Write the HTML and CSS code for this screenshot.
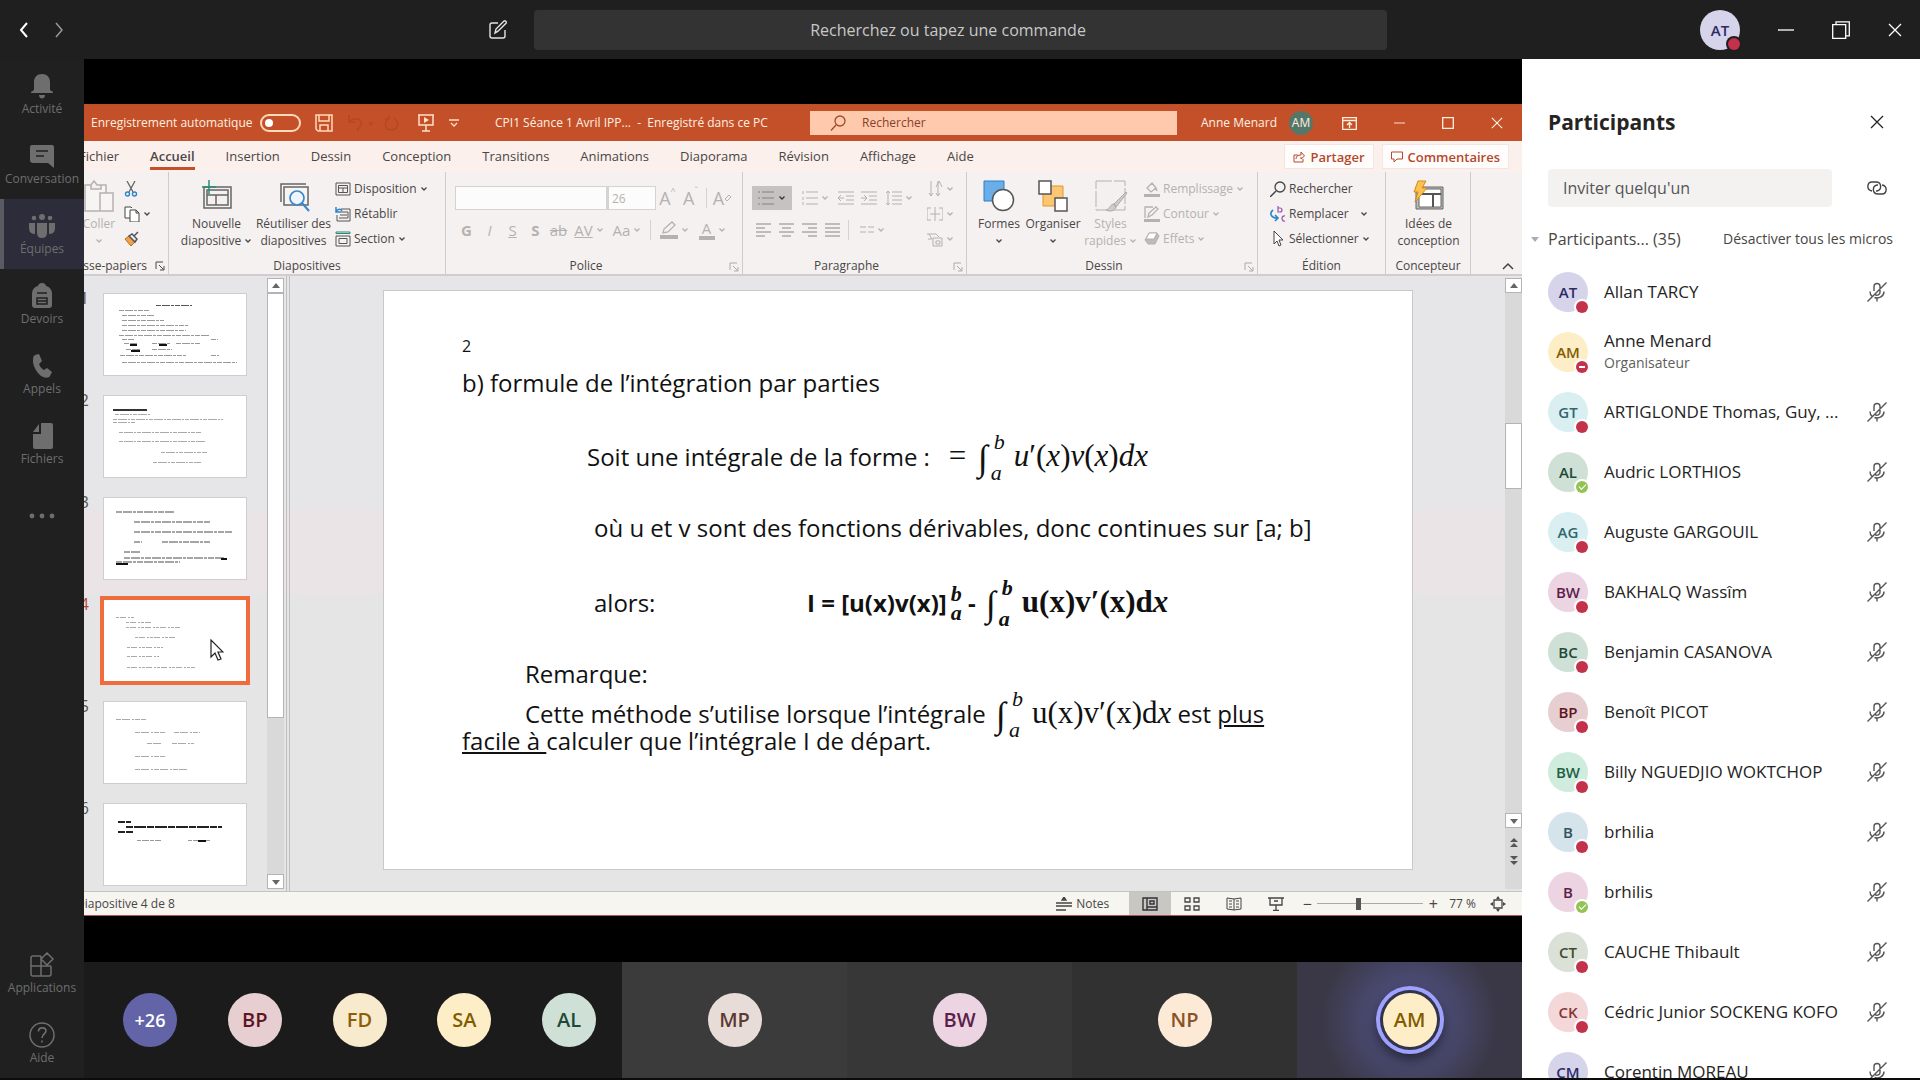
FILE: index.html
```html
<!DOCTYPE html>
<html lang="fr">
<head>
<meta charset="utf-8">
<title>Réunion - Équipes</title>
<link rel="stylesheet" href="styles.css">
</head>
<body>
<svg class="defs" aria-hidden="true">
  <symbol id="mic" viewBox="0 0 20 20"><path d="M7 9V4.500a3 3 0 0 1 6 0V10a3 3 0 0 1-5 2.500M3 9.500c0 2 .5 3.500 2 4.700M7.500 15.500c4.500 1.500 9.500-1 9.500-6M10 16v3.500M.5 19.500l19-19" fill="none" stroke="currentColor" stroke-width="1.400"/></symbol>
  <symbol id="caret" viewBox="0 0 8 8"><path d="M1.500 2.500L4 5l2.500-2.500" fill="none" stroke="currentColor" stroke-width="1.300"/></symbol>
  <symbol id="launch" viewBox="0 0 10 10"><path d="M1 8V1h7M4 4l4.500 4.500M9 5v4H5" fill="none" stroke="currentColor"/></symbol>
  <symbol id="close" viewBox="0 0 14 14"><path d="M1 1l12 12M13 1L1 13" fill="none" stroke="currentColor" stroke-width="1.300"/></symbol>
  <symbol id="dash" viewBox="0 0 16 14"><path d="M0 7h16" stroke="currentColor" stroke-width="1.300"/></symbol>
  <symbol id="up" viewBox="0 0 8 8"><path d="M0 6l4-5 4 5z" fill="currentColor"/></symbol>
  <symbol id="down" viewBox="0 0 8 8"><path d="M0 2l4 5 4-5z" fill="currentColor"/></symbol>
</svg>

<header class="topbar">
  <div class="history">
    <button aria-label="Précédent"><svg width="10" height="16" viewBox="0 0 10 16"><path d="M8 1L2 8l6 7" fill="none" stroke="#fff" stroke-width="2"/></svg></button>
    <button aria-label="Suivant"><svg width="10" height="16" viewBox="0 0 10 16"><path d="M2 1l6 7-6 7" fill="none" stroke="#999" stroke-width="1.500"/></svg></button>
  </div>
  <button class="compose" aria-label="Nouvelle conversation"><svg width="20" height="20" viewBox="0 0 20 20"><path d="M10 3H4a2 2 0 0 0-2 2v11a2 2 0 0 0 2 2h11a2 2 0 0 0 2-2v-6M7 13l1-4 8-8c1-.8 3 1 2 2.200l-8 8z" fill="none" stroke="#e4e4e4" stroke-width="1.400"/></svg></button>
  <input class="command" type="text" aria-label="Recherche" placeholder="Recherchez ou tapez une commande">
  <div class="window-tools">
    <span class="avatar c-violet on-dark">AT<i class="dot"></i></span>
    <button aria-label="Réduire"><svg width="16" height="14"><use href="#dash"/></svg></button>
    <button aria-label="Restaurer"><svg width="18" height="18" viewBox="0 0 18 18"><path d="M.7 3.700h13v13.600H.7zM4 3.500V.8h13.300v14H14" fill="none" stroke="#fff" stroke-width="1.300"/></svg></button>
    <button aria-label="Fermer"><svg width="14" height="14"><use href="#close"/></svg></button>
  </div>
</header>

<main class="app">
  <nav class="rail">
    <a href="#"><svg width="26" height="26" viewBox="0 0 26 26"><path d="M13 1c-5 0-8 3.500-8 8v8l-3 2v1h22v-1l-3-2V9c0-4.500-3-8-8-8zM10 22h6c0 2-1.200 3.500-3 3.500S10 24 10 22z" fill="currentColor"/></svg>Activité</a>
    <a href="#"><svg width="26" height="26" viewBox="0 0 26 26"><path d="M2 2h21q2 0 2 2v21l-6-5H4q-3 0-3-3V4q0-2 2-2z" fill="currentColor"/><path d="M7 8h12M7 13h8" stroke="#202020" stroke-width="1.500"/></svg>Conversation</a>
    <a href="#" class="active"><svg width="26" height="26" viewBox="0 0 26 26"><g fill="currentColor"><circle cx="13" cy="4" r="3"/><circle cx="5" cy="5" r="2.300"/><circle cx="21" cy="5" r="2.300"/><path d="M8 10h10v10q0 5-5 5t-5-5zM0 10h6v11Q0 21 0 15zM20 10h6v5q0 6-6 6z"/></g></svg>Équipes</a>
    <a href="#"><svg width="26" height="26" viewBox="0 0 26 26"><path d="M13 0c3 0 4 2 4 3 4 1 6 4 6 8v11q0 3-3 3H6q-3 0-3-3V11c0-4 2-7 6-8 0-1 1-3 4-3z" fill="currentColor"/><path d="M8 10h10M8 15h10v6H8zM8 18h10" fill="none" stroke="#202020" stroke-width="1.500"/></svg>Devoirs</a>
    <a href="#"><svg width="26" height="26" viewBox="0 0 26 26"><path d="M6 2l4-1 3 7-3 3c1 3 3 5 5 6l3-2 5 4-2 4c-1 2-4 2-7 1C8 21 4 13 4 8c0-3 0-5 2-6z" fill="currentColor"/></svg>Appels</a>
    <a href="#"><svg width="26" height="26" viewBox="0 0 26 26"><path d="M12 0h10q2 0 2 2v22q0 2-2 2H6q-2 0-2-2V11h8zM10 1v8H4z" fill="currentColor"/></svg>Fichiers</a>
    <a href="#" aria-label="Plus"><svg width="26" height="6" viewBox="0 0 26 6"><g fill="currentColor"><circle cx="3" cy="3" r="2.400"/><circle cx="13" cy="3" r="2.400"/><circle cx="23" cy="3" r="2.400"/></g></svg></a>
    <a href="#" class="push"><svg width="26" height="26" viewBox="0 0 26 26"><path d="M12 4H4q-2 0-2 2v16q0 2 2 2h16q2 0 2-2v-8M2 14h20M12 4v20M18 1l6 6-6 6-6-6z" fill="none" stroke="currentColor" stroke-width="1.500"/></svg>Applications</a>
    <a href="#"><svg width="26" height="26" viewBox="0 0 26 26"><circle cx="13" cy="13" r="12" fill="none" stroke="currentColor" stroke-width="1.500"/><path d="M9.500 9.500c0-5 7.500-4.500 7.500-.5 0 3-4 3-4 7M13 18.500v2" fill="none" stroke="currentColor" stroke-width="1.600"/></svg>Aide</a>
  </nav>

  <section class="meeting">
    <div class="share">
      <div class="ppt-title">
        <div class="quick">
          <label class="autosave">Enregistrement automatique<input type="checkbox" class="toggle"></label>
          <svg width="18" height="18" viewBox="0 0 18 18"><path d="M1 1h16v16H3l-2-2zM4 1v6h10V1M5 17v-6h8v6" fill="none" stroke="#ffd9b8" stroke-width="1.500"/></svg>
          <svg class="faded" width="56" height="18" viewBox="0 0 56 18"><path d="M2 1v7h7M2 8c5-6 13-3 12 3l-4 6M22 8l2 3 2-3M42 4c-5 4-5 12 2 12s9-8 3-12M42 1v4h-4" fill="none" stroke="currentColor" stroke-width="1.500"/></svg>
          <svg width="18" height="18" viewBox="0 0 18 18"><path d="M1 1h16M2 1v10h14V1M9 11v6M5 17h8" fill="none" stroke="#ffe0c4" stroke-width="1.500"/><path d="M7 3l5 3-5 3z" fill="#ffe0c4"/></svg>
          <svg width="10" height="8" viewBox="0 0 10 8"><path d="M0 1h10M2 4l3 3 3-3" fill="none" stroke="#ffe0c4" stroke-width="1.300"/></svg>
        </div>
        <span class="doc">CPI1 Séance 1 Avril IPP...&nbsp; -&nbsp; Enregistré dans ce PC</span>
        <label class="ppt-search"><svg width="16" height="16" viewBox="0 0 16 16"><circle cx="10" cy="6" r="5" fill="none" stroke="#a04a28" stroke-width="1.300"/><path d="M6 10l-5 5.500" stroke="#a04a28" stroke-width="1.300"/></svg><input type="text" aria-label="Rechercher" value="Rechercher"></label>
        <div class="ppt-user">
          <span class="who">Anne Menard<span class="mini">AM</span></span>
          <svg width="15" height="13" viewBox="0 0 15 13"><path d="M.7.700h13.600v11.600H.7zM1 3.500h13M7.500 11V5.500M5 8l2.500-2.500L10 8" fill="none" stroke="currentColor" stroke-width="1.300"/></svg>
          <svg width="11" height="14"><use href="#dash"/></svg>
          <svg width="12" height="12" viewBox="0 0 12 12"><path d="M.7.700h10.600v10.600H.7z" fill="none" stroke="currentColor" stroke-width="1.300"/></svg>
          <svg width="12" height="12"><use href="#close"/></svg>
        </div>
      </div>

      <div class="tabs">
        <div class="tablist">
          <a href="#">Fichier</a><a href="#" class="current">Accueil</a><a href="#">Insertion</a><a href="#">Dessin</a><a href="#">Conception</a><a href="#">Transitions</a><a href="#">Animations</a><a href="#">Diaporama</a><a href="#">Révision</a><a href="#">Affichage</a><a href="#">Aide</a>
        </div>
        <button class="pill"><svg width="12" height="12" viewBox="0 0 12 12"><path d="M5 4H1v7h9V8M3 8c0-3 2-4 5-4V1l3.500 4L8 8V6" fill="none" stroke="currentColor"/></svg>Partager</button>
        <button class="pill"><svg width="12" height="12" viewBox="0 0 12 12"><path d="M.5 1h11v7H6l-3 3V8H.5z" fill="none" stroke="currentColor"/></svg>Commentaires</button>
      </div>

      <div class="ribbon">
        <div class="group clip">
          <div class="tools">
            <button class="big pale"><svg width="32" height="32" viewBox="0 0 32 32"><path d="M17 31H2V5h6l3-4 3 4h9v8M8 5v4h10V5M17 13h13v18H17z" fill="#f7f5f4" stroke="currentColor" stroke-width="1.500"/></svg><span>Coller</span><span><svg width="8" height="16"><use href="#caret"/></svg></span></button>
            <div class="stack">
              <button aria-label="Couper"><svg width="14" height="16" viewBox="0 0 14 16"><path d="M3 0l6 11M11 0L5 11" stroke="#666" stroke-width="1.300"/><circle cx="3.500" cy="13" r="2" fill="none" stroke="#2a86c8" stroke-width="1.400"/><circle cx="10.500" cy="13" r="2" fill="none" stroke="#2a86c8" stroke-width="1.400"/></svg></button>
              <button aria-label="Copier"><svg width="16" height="16" viewBox="0 0 16 16"><path d="M6 12H1V1h6l1 1M6 4h6l3 3v9H6zM12 4v3h3" fill="#fff" stroke="#444"/></svg><svg width="8" height="8"><use href="#caret"/></svg></button>
              <button aria-label="Reproduire la mise en forme"><svg width="16" height="16" viewBox="0 0 16 16"><path d="M1 8l6 7 4-4-6-6z" fill="#f2a04a" stroke="#b86a20"/><path d="M5 5l6 6 2-3-5-5zM10 5l4-4" fill="#eee" stroke="#555" stroke-width="1.500"/></svg></button>
            </div>
          </div>
          <div class="caption right-end">Presse-papiers<svg width="10" height="10"><use href="#launch"/></svg></div>
        </div>

        <div class="group">
          <div class="tools">
            <button class="big"><svg width="32" height="32" viewBox="0 0 32 32"><path d="M3 7h27v21H3zM6 10h21v15H6zM6 15h21M15 15v10" fill="none" stroke="#666" stroke-width="1.500"/><path d="M8 0v14M1 7h14" stroke="#2d8a78" stroke-width="1.500"/></svg><span>Nouvelle</span><span>diapositive <svg width="8" height="8"><use href="#caret"/></svg></span></button>
            <button class="big"><svg width="32" height="32" viewBox="0 0 32 32"><path d="M3 22V4h25M6 25V7h24v18z" fill="#f7f5f4" stroke="#666" stroke-width="1.500"/><circle cx="19" cy="18" r="7" fill="#eef5fb" stroke="#3b86cc" stroke-width="1.700"/><path d="M24 23l7 8" stroke="#3b86cc" stroke-width="2"/></svg><span>Réutiliser des</span><span>diapositives</span></button>
            <div class="stack">
              <button><svg width="16" height="16" viewBox="0 0 16 16"><path d="M1 2h14v12H1zM3.500 4.500h9v7h-9zM3.500 7h9M8 7v5" fill="none" stroke="#555"/></svg>Disposition<svg width="8" height="8"><use href="#caret"/></svg></button>
              <button><svg width="16" height="16" viewBox="0 0 16 16"><path d="M6 3h9v12H2V9M6 6h7v6H4M5 9h7" fill="none" stroke="#555"/><path d="M1 1v5h5M1 6c2-4 5-3 6-1" fill="none" stroke="#2a86c8" stroke-width="1.500"/></svg>Rétablir</button>
              <button><svg width="16" height="16" viewBox="0 0 16 16"><path d="M1 5h14v10H1zM4 7.500h8v5H4z" fill="none" stroke="#555"/><path d="M1 2.500h14V1H1z" stroke="#2d8a78" fill="none"/></svg>Section<svg width="8" height="8"><use href="#caret"/></svg></button>
            </div>
          </div>
          <div class="caption">Diapositives</div>
        </div>

        <div class="group">
          <div class="tools rows pale">
            <div class="row">
              <select class="font" aria-label="Police"><option></option></select><select class="size" aria-label="Taille"><option>26</option></select>
              <button class="ch l">A<sup>^</sup></button><button class="ch l">A<sup>ˇ</sup></button><i class="sep"></i><button class="ch l">A<svg width="8" height="8" viewBox="0 0 8 8"><path d="M1 5l4-4 2 2-4 4z" fill="none" stroke="currentColor"/></svg></button>
            </div>
            <div class="row">
              <button class="ch"><b>G</b></button><button class="ch"><em>I</em></button><button class="ch"><u>S</u></button><button class="ch"><b>S</b></button><button class="ch"><s>ab</s></button><button class="ch w"><u>AV</u><svg width="8" height="8"><use href="#caret"/></svg></button><button class="ch w">Aa<svg width="8" height="8"><use href="#caret"/></svg></button><i class="sep"></i>
              <button class="ch w"><svg width="18" height="18" viewBox="0 0 18 18"><path d="M3 12l1-4 8-7 3 3-7 7z" fill="none" stroke="currentColor" stroke-width="1.300"/><path d="M0 14h18v4H0z" fill="currentColor"/></svg><svg width="8" height="8"><use href="#caret"/></svg></button><button class="ch w"><span class="ink">A</span><svg width="8" height="8"><use href="#caret"/></svg></button>
            </div>
          </div>
          <div class="caption launched">Police<svg class="corner" width="10" height="10"><use href="#launch"/></svg></div>
        </div>

        <div class="group">
          <div class="tools pale">
            <div class="rows">
              <div class="row">
                <button class="sel"><svg width="16" height="16" viewBox="0 0 16 16"><path d="M4 2h12M4 8h12M4 14h12M0 2h2M0 8h2M0 14h2" stroke="#999" stroke-width="1.300"/></svg><svg width="8" height="8" class="ink-dark"><use href="#caret"/></svg></button>
                <button class="ch w"><svg width="16" height="16" viewBox="0 0 16 16"><path d="M4 2h12M4 8h12M4 14h12M1 1v3M1 7v3M1 12v3" stroke="currentColor"/></svg><svg width="8" height="8"><use href="#caret"/></svg></button>
                <button class="ch"><svg width="16" height="14" viewBox="0 0 16 14"><path d="M0 1h16M8 5h8M8 9h8M0 13h16M6 7H0M3 4L0 7l3 3" fill="none" stroke="currentColor"/></svg></button>
                <button class="ch"><svg width="16" height="14" viewBox="0 0 16 14"><path d="M0 1h16M8 5h8M8 9h8M0 13h16M0 7h6M3 4l3 3-3 3" fill="none" stroke="currentColor"/></svg></button>
                <button class="ch w"><svg width="16" height="14" viewBox="0 0 16 14"><path d="M6 1h10M6 5h10M6 9h10M6 13h10M2 0v14M0 2l2-2 2 2M0 12l2 2 2-2" fill="none" stroke="currentColor"/></svg><svg width="8" height="8"><use href="#caret"/></svg></button>
              </div>
              <div class="row ink-mid">
                <button class="ch"><svg width="15" height="14" viewBox="0 0 15 14"><path d="M0 1h15M0 5h9M0 9h15M0 13h9" stroke="currentColor"/></svg></button>
                <button class="ch"><svg width="15" height="14" viewBox="0 0 15 14"><path d="M0 1h15M3 5h9M0 9h15M3 13h9" stroke="currentColor"/></svg></button>
                <button class="ch"><svg width="15" height="14" viewBox="0 0 15 14"><path d="M0 1h15M6 5h9M0 9h15M6 13h9" stroke="currentColor"/></svg></button>
                <button class="ch"><svg width="15" height="14" viewBox="0 0 15 14"><path d="M0 1h15M0 5h15M0 9h15M0 13h15" stroke="currentColor"/></svg></button><i class="sep"></i>
                <button class="ch w pale"><svg width="14" height="8" viewBox="0 0 14 8"><path d="M0 1h6M8 1h6M0 6h6M8 6h6" stroke="currentColor"/></svg><svg width="8" height="8"><use href="#caret"/></svg></button>
              </div>
            </div>
            <div class="stack end">
              <button aria-label="Orientation"><svg width="16" height="16" viewBox="0 0 16 16"><path d="M4 0v15M2 12l2 3 2-3M11 0v15M9 12l2 3 2-3M9 6l3-6 3 6" fill="none" stroke="currentColor"/></svg><svg width="8" height="8"><use href="#caret"/></svg></button>
              <button aria-label="Aligner"><svg width="16" height="16" viewBox="0 0 16 16"><path d="M4 2H0v12h4M12 2h4v12h-4M3 8h10M8 1v14" fill="none" stroke="currentColor"/></svg><svg width="8" height="8"><use href="#caret"/></svg></button>
              <button aria-label="SmartArt"><svg width="16" height="16" viewBox="0 0 16 16"><path d="M0 3h9l3 3M2 3l3 5H1M6 7h9v8H6zM9 10h4v3H9z" fill="none" stroke="currentColor"/></svg><svg width="8" height="8"><use href="#caret"/></svg></button>
            </div>
          </div>
          <div class="caption launched">Paragraphe<svg class="corner" width="10" height="10"><use href="#launch"/></svg></div>
        </div>

        <div class="group">
          <div class="tools draw">
            <button class="big slim"><svg width="32" height="32" viewBox="0 0 32 32"><path d="M1 1h20v20H1z" fill="#69aee8" stroke="#2f7fc4"/><circle cx="20" cy="20" r="10.500" fill="#fff" stroke="#555" stroke-width="1.500"/></svg><span>Formes</span><span><svg width="8" height="12"><use href="#caret"/></svg></span></button>
            <button class="big slim"><svg width="32" height="32" viewBox="0 0 32 32"><path d="M6 6h20v20H6z" fill="#fbc773" stroke="#e0952c"/><path d="M2 1h12v13H2zM18 18h12v13H18z" fill="#fff" stroke="#555" stroke-width="1.500"/></svg><span>Organiser</span><span><svg width="8" height="12"><use href="#caret"/></svg></span></button>
            <button class="big styles pale"><svg width="32" height="32" viewBox="0 0 32 32"><path d="M1 1h29v29H1z" fill="#f3f0ef" stroke="currentColor" stroke-dasharray="16 2"/><path d="M31 12L19 24l2 3 11-14zM19 24c-4 0-4 5-8 6 4 2 9 1 10-3z" fill="#ccc" stroke="#aaa"/></svg><span>Styles</span><span>rapides <svg width="8" height="8"><use href="#caret"/></svg></span></button>
            <div class="stack pale">
              <button><svg width="16" height="16" viewBox="0 0 16 16"><path d="M3 7l5-5 4 5-5 4zM12 7l1 3" fill="none" stroke="currentColor" stroke-width="1.300"/><path d="M0 13h16v3H0z" fill="currentColor"/></svg>Remplissage<svg width="8" height="8"><use href="#caret"/></svg></button>
              <button><svg width="16" height="16" viewBox="0 0 16 16"><path d="M9 1H1v11M4 11l1-4 7-6 2 2-6 6z" fill="none" stroke="currentColor" stroke-width="1.300"/><path d="M0 13h16v3H0z" fill="currentColor"/></svg>Contour<svg width="8" height="8"><use href="#caret"/></svg></button>
              <button><svg width="16" height="16" viewBox="0 0 16 16"><path d="M1 9l4-7h8l2 3-4 8H4z" fill="#bbb" stroke="currentColor"/><path d="M5 2h8l-3 6H2z" fill="#fff" stroke="currentColor"/></svg>Effets<svg width="8" height="8"><use href="#caret"/></svg></button>
            </div>
          </div>
          <div class="caption launched">Dessin<svg class="corner" width="10" height="10"><use href="#launch"/></svg></div>
        </div>

        <div class="group">
          <div class="tools">
            <div class="stack">
              <button><svg width="16" height="16" viewBox="0 0 16 16"><circle cx="10" cy="6" r="5" fill="none" stroke="#444" stroke-width="1.300"/><path d="M6 10l-6 6" stroke="#444" stroke-width="1.500"/></svg>Rechercher</button>
              <button><svg width="16" height="16" viewBox="0 0 16 16"><path d="M8 0v6h2a2 2 0 0 0 0-4H8" fill="none" stroke="#9a4fb0" stroke-width="1.200"/><path d="M15 10c-4-1-4 6 0 5" fill="none" stroke="#9a4fb0" stroke-width="1.200"/><path d="M3 4c-4 3-2 8 4 8M5 9l3 3-3 3" fill="none" stroke="#2a86c8" stroke-width="1.600"/></svg>Remplacer<svg class="far" width="8" height="8"><use href="#caret"/></svg></button>
              <button><svg width="16" height="16" viewBox="0 0 16 16"><path d="M4 0v13l3-3 2 5 2-1-2-5h4z" fill="#fff" stroke="#444"/></svg>Sélectionner<svg width="8" height="8"><use href="#caret"/></svg></button>
            </div>
          </div>
          <div class="caption">Édition</div>
        </div>

        <div class="group">
          <div class="tools">
            <button class="big"><svg width="32" height="32" viewBox="0 0 32 32"><path d="M3 7h27v22H3z" fill="#bbb" stroke="#666"/><path d="M6 9h22v18H6z" fill="#fff" stroke="#666"/><path d="M6 14h22M20 14v13" stroke="#555" stroke-width="2"/><path d="M5 1h8L9 8h5L2 22l3-10H1z" fill="#ffc14d" stroke="#d08a1e"/></svg><span>Idées de</span><span>conception</span></button>
          </div>
          <div class="caption">Concepteur</div>
        </div>
        <button class="collapse" aria-label="Réduire le ruban"><svg width="12" height="8" viewBox="0 0 12 8"><path d="M1 7l5-5 5 5" fill="none" stroke="#444" stroke-width="1.500"/></svg></button>
      </div>

      <div class="work">
        <ul class="nums"><li>1</li><li>2</li><li>3</li><li class="hot">4</li><li>5</li><li>6</li></ul>
        <ol class="thumbs">
          <li><svg viewBox="0 0 142 81"><g stroke="#999" stroke-dasharray="5 1 8 1 3 1"><path d="M52 11.500h36" stroke="#555"/><path d="M15 16.500h30M18 21.500h32M18 26.500h42M18 31.500h66M18 36.500h64M15 41.500h90M18 45.500h12M20 49.500h13M48 49.500h18M72 49.500h25M22 55.500h14M48 55.500h20M16 61.500h66M18 68.500h115M107 45.500h7M107 61.500h8"/></g><path d="M26 51h7M55 51h8M27 57h9" stroke="#111" stroke-width="2"/></svg></li>
          <li><svg viewBox="0 0 142 81"><path d="M9 14h34" stroke="#333" stroke-width="2"/><g stroke="#aaa" stroke-dasharray="4 1 9 1 2 1"><path d="M11 18.500h36M9 23.500h110M9 26.500h22M15 36.500h82M15 45.500h86M57 56.500h46M49 66.500h48"/></g></svg></li>
          <li><svg viewBox="0 0 142 81"><g stroke="#888" stroke-dasharray="6 1 9 1 3 1" stroke-width="1.500"><path d="M12 14h58M30 24h76M30 34h98M30 44h8M58 44h48M20 54h16M20 60h100M12 64h64"/></g><path d="M12 66h12M117 61h6" stroke="#111" stroke-width="2"/></svg></li>
          <li class="on"><svg viewBox="0 0 142 81"><g stroke="#aaa" stroke-dasharray="3 1 6 2 2 1"><path d="M12 17.500h19M22 22.500h26M22 27.500h54M31 37.500h42M23 47.500h36M23 56.500h32M23 67.500h68"/></g><svg x="106" y="39" width="14" height="22" viewBox="0 0 14 22"><path d="M1 1v17l4-4 3 7 3-1-3-7h5z" fill="#fff" stroke="#222" stroke-width="1.200"/></svg></svg></li>
          <li><svg viewBox="0 0 142 81"><g stroke="#aaa" stroke-dasharray="5 1 8 2 2 1"><path d="M12 17.500h30M31 30.500h30M70 30.500h26M43 41.500h14M68 41.500h22M31 54.500h30M31 67.500h52"/></g></svg></li>
          <li><svg viewBox="0 0 142 81"><g stroke="#222" stroke-width="2" stroke-dasharray="7 1 12 1"><path d="M14 18h13M22 23h96M14 28h15"/></g><g stroke="#999"><path d="M33 36.500h24M84 36.500h22" stroke-dasharray="4 1 7 1"/><path d="M94 37h8" stroke="#111" stroke-width="2"/></g></svg></li>
        </ol>
        <div class="scroll left"><span class="btn"><svg width="8" height="8"><use href="#up"/></svg></span><span class="grip"></span><span class="btn last"><svg width="8" height="8"><use href="#down"/></svg></span></div>
        <div class="canvas">
          <article class="slide">
            <p class="no">2</p>
            <p class="head">b) formule de l’intégration par parties</p>
            <p class="form">Soit une intégrale de la forme :&nbsp;&nbsp; <span class="m">=&nbsp;<span class="int">∫<span class="lim"><i>b</i><i>a</i></span></span><i>u</i>′(<i>x</i>)<i>v</i>(<i>x</i>)<i>dx</i></span></p>
            <p class="where">où u et v sont des fonctions dérivables, donc continues sur [a; b]</p>
            <p class="then"><span class="so">alors:</span><b>I = [u(x)v(x)]<span class="m"><span class="lim tight"><i>b</i><i>a</i></span></span> - <span class="m"><span class="int">∫<span class="lim"><i>b</i><i>a</i></span></span>u(x)v′(x)d<i>x</i></span></b></p>
            <p class="note">Remarque:</p>
            <p class="body">Cette méthode s’utilise lorsque l’intégrale <span class="m"><span class="int">∫<span class="lim"><i>b</i><i>a</i></span></span>u(x)v′(x)d<i>x</i></span> est <u>plus</u><br><u>facile à </u>calculer que l’intégrale I de départ.</p>
          </article>
        </div>
        <div class="scroll right"><span class="btn"><svg width="8" height="8"><use href="#up"/></svg></span><span class="grip"></span><span class="btn last"><svg width="8" height="8"><use href="#down"/></svg></span><svg class="jump" width="10" height="10" viewBox="0 0 10 10"><path d="M1 5l4-4 4 4zM1 10l4-4 4 4z" fill="#555"/></svg><svg class="jump" width="10" height="10" viewBox="0 0 10 10"><path d="M1 0l4 4 4-4zM1 5l4 4 4-4z" fill="#555"/></svg></div>
      </div>

      <div class="status">
        <span class="where-am">Diapositive 4 de 8</span>
        <button class="notes"><svg width="16" height="14" viewBox="0 0 16 14"><path d="M6 3l2-3 2 3zM0 6h16M0 9h16M0 13h10" fill="#444" stroke="#444" stroke-width="1.300"/></svg>Notes</button>
        <button class="view on" aria-label="Normal"><svg width="16" height="14" viewBox="0 0 16 14"><path d="M1 1h14v12H1zM5 1v12M5 10h10M8 4h4v3H8z" fill="none" stroke="#333" stroke-width="1.400"/></svg></button>
        <button class="view" aria-label="Trieuse"><svg width="16" height="14" viewBox="0 0 16 14"><path d="M1 1h5v4H1zM10 1h5v4h-5zM1 9h5v4H1zM10 9h5v4h-5z" fill="none" stroke="#444" stroke-width="1.300"/></svg></button>
        <button class="view" aria-label="Lecture"><svg width="16" height="14" viewBox="0 0 16 14"><path d="M8 2v11M8 2L1 1v11l7 1 7-1V1zM3 4h3M3 7h3M3 10h3M10 4h3M10 7h3M10 10h3" fill="none" stroke="#444"/></svg></button>
        <button class="view" aria-label="Diaporama"><svg width="16" height="14" viewBox="0 0 16 14"><path d="M0 1h16M2 1v7h12V1M8 8v5M5 13.300h6M6 4h4" fill="none" stroke="#444" stroke-width="1.300"/></svg></button>
        <span class="sign">−</span><input class="zoom" type="range" min="10" max="200" value="82" aria-label="Zoom"><span class="sign">+</span>
        <span class="pct">77 %</span>
        <button aria-label="Ajuster"><svg width="16" height="16" viewBox="0 0 16 16"><path d="M4 4h8v8H4z" fill="none" stroke="#444" stroke-width="1.300"/><path d="M8 0l2 3H6zM8 16l2-3H6zM0 8l3-2v4zM16 8l-3-2v4z" fill="#444"/></svg></button>
      </div>
    </div>

    <div class="strip">
      <div class="crowd">
        <span class="face more-count">+26</span><span class="face c-rose">BP</span><span class="face c-cream">FD</span><span class="face c-yellow">SA</span><span class="face c-green">AL</span>
      </div>
      <div class="tile t1"><span class="face c-clay">MP</span></div>
      <div class="tile t2"><span class="face c-pink">BW</span></div>
      <div class="tile t3"><span class="face c-peach">NP</span></div>
      <div class="tile t4"><span class="face c-yellow speaking">AM</span></div>
    </div>
  </section>

  <aside class="people">
    <div class="people-head"><h2>Participants</h2><button aria-label="Fermer"><svg width="14" height="14"><use href="#close"/></svg></button></div>
    <div class="invite"><input type="text" aria-label="Inviter quelqu'un" placeholder="Inviter quelqu'un"><button aria-label="Copier le lien"><svg width="20" height="16" viewBox="0 0 20 16"><path d="M5 11C-1 10 0 2 5 2h4c6 0 6 8 1 9H9M15 5c6 1 5 9 0 9h-4c-6 0-6-8-1-9h1" fill="none" stroke="currentColor" stroke-width="1.400"/></svg></button></div>
    <div class="section"><svg width="8" height="8"><use href="#down"/></svg><h3>Participants... (35)</h3><a href="#">Désactiver tous les micros</a></div>
    <ul class="list">
      <li><span class="avatar c-violet">AT<i class="dot"></i></span><span class="name">Allan TARCY</span><svg><use href="#mic"/></svg></li>
      <li><span class="avatar c-yellow">AM<i class="dot busy"></i></span><span class="name">Anne Menard<small>Organisateur</small></span></li>
      <li><span class="avatar c-cyan">GT<i class="dot"></i></span><span class="name">ARTIGLONDE Thomas, Guy, ...</span><svg><use href="#mic"/></svg></li>
      <li><span class="avatar c-green">AL<i class="dot ok"></i></span><span class="name">Audric LORTHIOS</span><svg><use href="#mic"/></svg></li>
      <li><span class="avatar c-cyan">AG<i class="dot"></i></span><span class="name">Auguste GARGOUIL</span><svg><use href="#mic"/></svg></li>
      <li><span class="avatar c-pink">BW<i class="dot"></i></span><span class="name">BAKHALQ Wassîm</span><svg><use href="#mic"/></svg></li>
      <li><span class="avatar c-green">BC<i class="dot"></i></span><span class="name">Benjamin CASANOVA</span><svg><use href="#mic"/></svg></li>
      <li><span class="avatar c-rose">BP<i class="dot"></i></span><span class="name">Benoît PICOT</span><svg><use href="#mic"/></svg></li>
      <li><span class="avatar c-mint">BW<i class="dot"></i></span><span class="name">Billy NGUEDJIO WOKTCHOP</span><svg><use href="#mic"/></svg></li>
      <li><span class="avatar c-steel">B<i class="dot"></i></span><span class="name">brhilia</span><svg><use href="#mic"/></svg></li>
      <li><span class="avatar c-pink">B<i class="dot ok"></i></span><span class="name">brhilis</span><svg><use href="#mic"/></svg></li>
      <li><span class="avatar c-olive">CT<i class="dot"></i></span><span class="name">CAUCHE Thibault</span><svg><use href="#mic"/></svg></li>
      <li><span class="avatar c-red">CK<i class="dot"></i></span><span class="name">Cédric Junior SOCKENG KOFO</span><svg><use href="#mic"/></svg></li>
      <li><span class="avatar c-violet">CM<i class="dot"></i></span><span class="name">Corentin MOREAU</span><svg><use href="#mic"/></svg></li>
    </ul>
  </aside>
</main>
</body>
</html>
```
FILE: styles.css
```css
* { box-sizing: border-box; }
body {
  margin: 0; height: 100vh; overflow: hidden;
  display: flex; flex-direction: column;
  background: #1f1f1f; border-bottom: 2px solid #0c0c0c;
  font: 13px/18px "Open Sans", "Noto Sans", sans-serif; color: #252423;
}
button, input, select { font: inherit; color: inherit; border: 0; background: none; padding: 0; margin: 0; }
button { display: flex; align-items: center; justify-content: center; }
a { color: inherit; text-decoration: none; }
ul, ol { list-style: none; margin: 0; padding: 0; }
h2, h3, p { margin: 0; font-weight: 400; }
svg { flex: none; display: block; }
.defs { position: absolute; width: 0; height: 0; }

/* top bar */
.topbar { flex: none; height: 59px; display: grid; grid-template-columns: 1fr 853px 1fr; align-items: center; color: #fff; grid-template-areas: "left mid right"; }
.history { grid-area: left; display: flex; gap: 25px; padding-left: 19px; }
.compose { grid-area: left; justify-self: end; margin-right: 26px; }
.command { grid-area: mid; height: 40px; border-radius: 4px; background: #333; text-align: center; padding-right: 24px; font-size: 16px; }
.command::placeholder { color: #c8c8c8; opacity: 1; }
.window-tools { grid-area: right; justify-self: end; display: flex; align-items: center; gap: 38px; padding-right: 18px; }

/* avatars */
.avatar { position: relative; flex: none; width: 40px; height: 40px; border-radius: 50%; display: grid; place-items: center; font-size: 15px; font-weight: 600; }
.dot { position: absolute; right: 0; bottom: -1px; width: 12px; height: 12px; border-radius: 50%; background: #c4314b; box-shadow: 0 0 0 2px #fff; }
.on-dark .dot { box-shadow: 0 0 0 2px #1f1f1f; bottom: 0; }
.busy::after { content: ""; position: absolute; left: 3px; top: 5px; width: 6px; height: 2px; background: #fff; }
.ok { background: #92c353; }
.ok::after { content: ""; position: absolute; left: 3px; top: 3px; width: 6px; height: 3px; border: solid #fff; border-width: 0 0 1px 1px; transform: rotate(-45deg); }
.c-violet { background: #d6d4ea; color: #2f2a66; }
.c-yellow { background: #fdeec8; color: #835c00; }
.c-cream { background: #f8eacc; color: #8a5f0c; }
.c-cyan { background: #d9eff2; color: #32666d; }
.c-green { background: #cfe1d6; color: #1f4a35; }
.c-pink { background: #ecd4e2; color: #5c1f4b; }
.c-rose { background: #e6ced1; color: #5f1521; }
.c-mint { background: #d0ecdd; color: #1f6044; }
.c-steel { background: #d5e3ea; color: #33525f; }
.c-olive { background: #dbe1d6; color: #3e4c2e; }
.c-red { background: #f4d7d8; color: #83343a; }
.c-clay { background: #e8dcd9; color: #5c3a30; }
.c-peach { background: #fce9d6; color: #8a5326; }

.app { flex: 1; min-height: 0; display: grid; grid-template-columns: 84px minmax(0, 1fr) 398px; }

/* left rail */
.rail { display: flex; flex-direction: column; color: #6e6e6e; background: #202020; }
.rail a { height: 70px; display: flex; flex-direction: column; align-items: center; justify-content: center; gap: 1px; font-size: 12px; padding-top: 3px; }
.rail .active { background: #2c2c3b; border-left: 4px solid #5a5a62; padding-right: 4px; }
.rail .push { margin-top: auto; }

/* shared screen */
.meeting { display: flex; flex-direction: column; min-width: 0; min-height: 0; background: #000; padding-top: 45px; }
.share { flex: 1; min-height: 0; display: flex; flex-direction: column; overflow: hidden; background: #e6e6e8; color: #4a4646; border-bottom: 1px solid #a8545c; margin-bottom: 46px; font-size: 12px; }
.ppt-title { height: 37px; flex: none; display: grid; grid-template-columns: 405fr 321fr 367fr 345fr; align-items: center; background: #c4502a; color: #fff0e0; border-top: 1px solid #b8502a; white-space: nowrap; }
.quick { display: flex; align-items: center; gap: 14px; padding-left: 7px; }
.autosave { display: flex; align-items: center; gap: 7px; }
.toggle { appearance: none; width: 41px; height: 18px; border: 2px solid #ffd9b8; border-radius: 9px; display: flex; align-items: center; padding-left: 3px; }
.toggle::before { content: ""; width: 8px; height: 8px; border-radius: 50%; background: #fff; }
.faded { color: #b4481f; }
.doc { padding-left: 6px; }
.ppt-search { height: 24px; background: #ffc9ae; display: flex; align-items: center; gap: 16px; padding-left: 20px; color: #8a4028; }
.ppt-search input { flex: 1; min-width: 0; }
.ppt-user { display: flex; align-items: center; justify-content: flex-end; padding-right: 19px; gap: 37px; }
.who { display: flex; align-items: center; gap: 12px; margin-right: -8px; }
.mini { width: 24px; height: 24px; border-radius: 50%; background: #55776a; display: grid; place-items: center; }

.tabs { flex: none; height: 31px; display: flex; align-items: center; gap: 10px; background: #fbf0ec; padding-right: 14px; font-size: 13px; white-space: nowrap; }
.tablist { flex: 1; display: flex; gap: 31px; margin-left: -5px; }
.tablist a { height: 27px; line-height: 27px; }
.tablist .current { font-weight: 600; border-bottom: 3px solid #c4502a; }
.pill { height: 23px; gap: 5px; padding: 0 8px; background: #fffdfb; color: #b7472a; font-weight: 600; box-shadow: 0 0 0 1px #f3e6e2; }

.ribbon { flex: none; height: 104px; background: #f4f1f0; display: grid; grid-template-columns: 85fr 277fr 297fr 224fr 291fr 128fr 85fr 51fr; border-bottom: 2px solid #cfcdce; white-space: nowrap; line-height: 17px; }
.group { position: relative; min-width: 0; border-right: 1px solid #cfcbca; display: flex; flex-direction: column; justify-content: space-between; }
.tools { display: flex; padding-left: 9px; }
.caption { text-align: center; line-height: 16px; }
.launched { padding-right: 16px; }
.corner { position: absolute; right: 3px; bottom: 2px; color: #aaa; }
.right-end { display: flex; justify-content: flex-end; align-items: center; gap: 8px; padding-right: 3px; }
.clip .tools { padding-left: 0; }
.clip .big { width: 30px; }
.big { flex-direction: column; justify-content: flex-start; width: 77px; padding-top: 8px; }
.big > svg { margin-bottom: 3px; }
.big span { display: flex; align-items: center; gap: 3px; height: 17px; }
.big.slim { width: 54px; }
.big.styles { width: 61px; }
.tools.draw { padding-left: 5px; }
.group:last-of-type .tools { padding-left: 4px; }
.pale { color: #b5b1b0; }
.stack { display: flex; flex-direction: column; align-items: flex-start; padding: 4px 0 0 3px; }
.stack button { height: 25px; gap: 3px; }
.far { margin-left: 8px; }
.clip .stack { padding-left: 10px; }
.rows { display: flex; flex-direction: column; gap: 8px; padding-top: 14px; }
.row { display: flex; align-items: center; height: 24px; }
.font, .size { appearance: none; height: 24px; background: #fdfcfc; border: 1px solid #d6d2d1; width: 152px; padding: 0 3px; }
.size { width: 49px; border-left-width: 2px; }
.ch { width: 23px; height: 24px; font-size: 15px; gap: 3px; }
.ch sup { font-size: 9px; line-height: 9px; align-self: flex-start; }
.row .l { font-size: 18px; gap: 0; }
.w { width: 38px; }
.ink { border-bottom: 4px solid #b5b1b0; line-height: 15px; width: 16px; }
.sep { width: 1px; height: 20px; background: #d6d2d1; margin: 0 4px; }
.sel { width: 40px; height: 24px; background: #c6c2c1; gap: 4px; margin-right: 4px; }
.ink-dark { color: #333; }
.ink-mid { color: #8a8685; }
.end { margin-left: auto; padding-right: 12px; }
.collapse { align-self: end; margin-bottom: 4px; justify-self: end; margin-right: 8px; }

/* slide workspace */
.work { flex: 1; min-height: 0; display: flex; background: linear-gradient(#e6e6e8 0 234px, #ebe4e6 234px 318px, #e5e5e6 318px); border-bottom: 1px solid #c4c4c6; }
.nums { width: 16px; flex: none; padding-top: 13px; overflow: hidden; direction: rtl; }
.nums li { height: 102px; font-size: 16px; color: #555; margin-right: 11px; }
.nums .hot { color: #b8443a; }
.thumbs { width: 167px; display: flex; flex-direction: column; gap: 21px; padding: 18px 0 0 4px; flex: none; overflow: hidden; }
.thumbs li { flex: none; width: 142px; height: 81px; background: #fff; outline: 1px solid #cfcdd0; }
.thumbs .on { outline: 4px solid #f06c3c; }
.scroll { flex: none; width: 17px; display: flex; flex-direction: column; background: #d9d9da; margin: 2px 0; color: #666; }
.btn, .grip { background: #fff; border: 1px solid #b4b4b6; }
.btn { height: 15px; display: grid; place-items: center; }
.last { margin-top: auto; }
.left .grip { height: 425px; }
.canvas { flex: 1; min-width: 0; display: flex; padding: 14px 92px 21px 93px; border-left: 4px double #bfbfc2; margin-left: 2px; }
.right .grip { margin-top: 130px; height: 66px; }
.jump { margin: 7px auto 2px; }
.right .btn.last { margin-bottom: 2px; }
.right .jump:last-child { margin-bottom: 23px; }
.slide { flex: 1; min-width: 0; background: #fff; border: 1px solid #c9c9cb; padding: 45px 0 0 78px; font: 24px/32px "Open Sans", "Noto Sans", sans-serif; color: #111; white-space: nowrap; }
.no { font-size: 16px; line-height: 20px; }
.head { margin-top: 11px; }
.form { margin: 38px 0 0 125px; line-height: 40px; }
.where { margin: 35px 0 0 132px; }
.then { margin: 39px 0 0 132px; line-height: 40px; display: flex; }
.so { width: 213px; }
.note { margin: 35px 0 0 63px; }
.body { margin-top: 10px; line-height: 27px; text-indent: 63px; }
.m { font-family: "Liberation Serif", serif; font-size: 31px; line-height: 0; }
.int, .lim { display: inline-flex; align-items: center; height: 12px; line-height: 27px; vertical-align: middle; text-indent: 0; }
.int { font-size: 36px; font-weight: 400; margin: 0 9px 0 4px; }
.lim { flex-direction: column; justify-content: center; font-size: 22px; padding-bottom: 4px; }
.lim i { line-height: 31px; }
.lim i:first-child { padding-left: 6px; }
.tight { margin-left: 4px; }
.tight i { line-height: 19px; }
.tight i:first-child { padding-left: 0; }
b .lim { font-weight: 700; }

.status { flex: none; height: 23px; display: flex; align-items: center; background: #f6f5f0; padding-right: 16px; white-space: nowrap; }
.where-am { margin-left: -8px; margin-right: auto; }
.notes { gap: 4px; margin-right: 20px; }
.view { width: 42px; height: 23px; }
.view.on { background: #c9c7c4; }
.sign { width: 20px; text-align: center; font-size: 16px; }
.zoom { appearance: none; width: 106px; height: 14px; background: linear-gradient(#aaa, #aaa) center / 100% 1px no-repeat; }
.zoom::-webkit-slider-thumb { appearance: none; width: 5px; height: 12px; background: #555; }
.pct { margin: 0 14px 0 6px; }

/* participant strip */
.strip { flex: none; height: 116px; display: grid; grid-template-columns: 538fr 225fr 225fr 225fr 225fr; background: #1b1b1b; }
.crowd { display: flex; align-items: center; justify-content: space-between; padding: 0 26px 0 39px; }
.tile { display: grid; place-items: center; }
.t1 { background: #3b3b3b; }
.t2 { background: #373737; }
.t3 { background: #313131; }
.t4 { background: radial-gradient(circle, #5c5c96 0, #464668 40%, #3a3846 70%); }
.face { width: 54px; height: 54px; border-radius: 50%; display: grid; place-items: center; font-size: 20px; font-weight: 600; }
.more-count { background: #6264a7; color: #fff; font-size: 18px; }
.speaking { box-shadow: 0 0 0 3px #33334a, 0 0 0 7px #9ea2ff, 0 6px 14px 6px #22222e; }

/* people panel */
.people { background: #fff; display: flex; flex-direction: column; padding: 0 27px 0 26px; min-height: 0; overflow: hidden; color: #252423; }
.people-head { margin-top: 44px; height: 37px; flex: none; display: flex; align-items: center; justify-content: space-between; padding-right: 9px; }
h2 { font-size: 21px; font-weight: 700; }
.invite { flex: none; margin-top: 29px; display: flex; align-items: center; justify-content: space-between; padding-right: 6px; color: #444; }
.invite input { width: 284px; height: 38px; border-radius: 4px; background: #f3f2f1; padding: 0 15px; font-size: 16px; }
.invite input::placeholder { color: #555; opacity: 1; }
.section { flex: none; display: flex; align-items: center; height: 64px; margin-left: -17px; color: #484644; }
.section svg { margin-right: 9px; color: #a9abb8; }
h3 { font-size: 16px; flex: 1; }
.section a { font-size: 14px; }
.list { flex: none; margin-top: -9px; }
.list li { height: 60px; display: flex; align-items: center; gap: 16px; padding-right: 6px; }
.name { flex: 1; font-size: 17px; line-height: 22px; white-space: nowrap; }
.name small { display: block; font-size: 14px; color: #605e5c; }
.list li > svg { width: 20px; height: 20px; color: #555; }
```
